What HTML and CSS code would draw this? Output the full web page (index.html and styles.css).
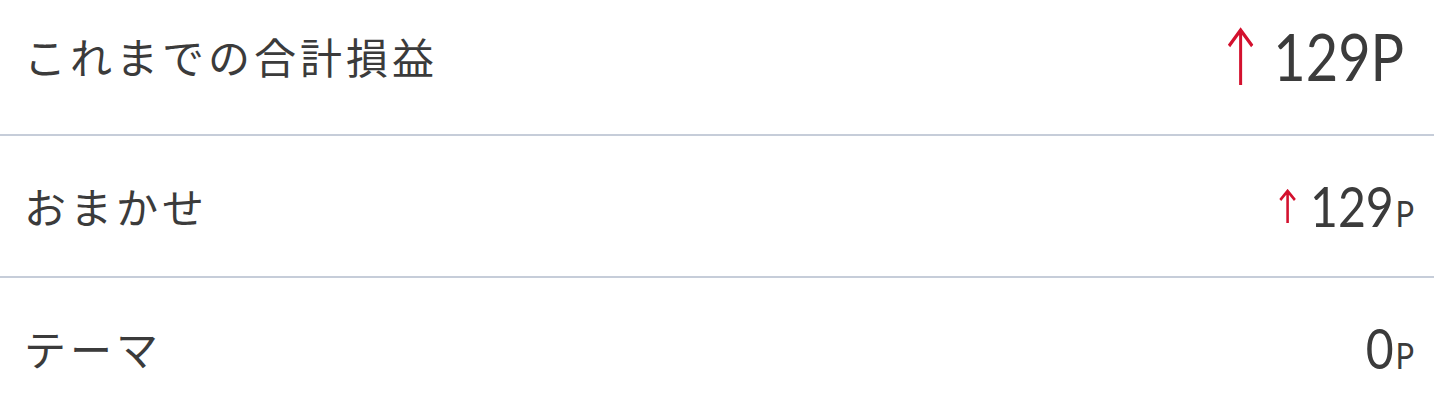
FILE: index.html
```html
<!DOCTYPE html>
<html lang="ja">
<head>
<meta charset="utf-8">
<title>損益</title>
<link rel="stylesheet" href="styles.css">
</head>
<body>
<div class="list">
  <div class="row row-total">
    <span class="label">これまでの合計損益</span>
    <span class="value value-lg">
      <svg class="arrow arrow-lg" width="30" height="58" viewBox="0 0 30 58" aria-hidden="true">
        <path d="M15 58V3 M1.5 19L15 3L28.5 19" fill="none" stroke="#d3112e" stroke-width="3.5"/>
      </svg>
      <span class="num">129P</span>
    </span>
  </div>
  <div class="row">
    <span class="label">おまかせ</span>
    <span class="value">
      <svg class="arrow arrow-sm" width="20" height="34" viewBox="0 0 20 34" aria-hidden="true">
        <path d="M10 34V2 M1.5 11L10 2L18.5 11" fill="none" stroke="#d3112e" stroke-width="3"/>
      </svg>
      <span class="num">129</span><span class="unit">P</span>
    </span>
  </div>
  <div class="row">
    <span class="label">テーマ</span>
    <span class="value">
      <span class="num">0</span><span class="unit">P</span>
    </span>
  </div>
</div>
</body>
</html>
```
FILE: styles.css
```css
html, body {
  margin: 0;
  padding: 0;
  background: #ffffff;
}

.list {
  display: flex;
  flex-direction: column;
}

.row {
  display: flex;
  align-items: center;
  justify-content: space-between;
  height: 140px;
  padding: 0 20px 0 24px;
  border-bottom: 2px solid #c6cdd9;
  box-sizing: content-box;
  color: #3b3b3b;
}

.row-total {
  height: 112px;
  padding-bottom: 22px;
  padding-right: 30px;
}

.label {
  font-family: "Noto Sans CJK JP", sans-serif;
  font-size: 42px;
  letter-spacing: 4px;
  line-height: 1;
}

.value {
  display: flex;
  align-items: baseline;
  font-family: Lato, sans-serif;
  font-weight: 400;
  line-height: 1;
  transform: scaleX(0.86);
  transform-origin: right center;
}

.arrow {
  align-self: center;
  display: block;
}

.arrow-lg {
  margin-right: 23px;
}

.arrow-sm {
  margin-right: 16px;
}

.value-lg .num {
  font-size: 65px;
}

.num {
  font-size: 56px;
}

.unit {
  font-size: 36px;
  margin-left: 2px;
}
```
